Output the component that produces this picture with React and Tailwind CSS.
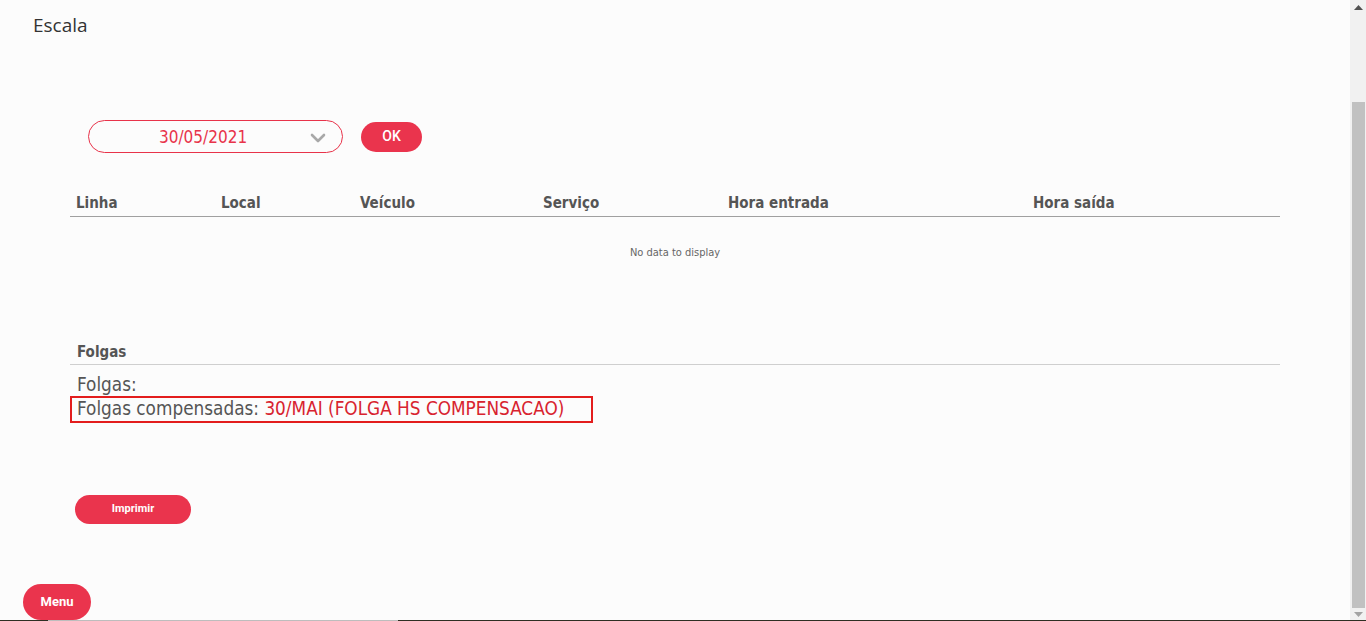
import React from "react";

const cond = { fontFamily: '"DejaVu Sans Condensed", "DejaVu Sans", sans-serif' };

function Chevron() {
  return (
    <svg width="16" height="10" viewBox="0 0 16 10" className="block">
      <path d="M2 2 L8 8 L14 2" fill="none" stroke="#a8a8a8" strokeWidth="2.6" strokeLinecap="round" strokeLinejoin="round" />
    </svg>
  );
}

export default function App() {
  const cols = ["Linha", "Local", "Veículo", "Serviço", "Hora entrada", "Hora saída"];
  return (
    <div className="relative flex h-[621px] w-[1366px] overflow-hidden bg-[#fcfcfc]">
      <div className="flex flex-1 flex-col">
        <h1
          className="pl-[33px] pt-[12px] text-[19px] leading-[26px] text-[#333]"
          style={{ fontFamily: '"Open Sans", sans-serif' }}
        >
          Escala
        </h1>

        <div className="mt-[82px] flex items-center gap-[18px] pl-[88px]">
          <div className="flex h-[33px] w-[255px] items-center rounded-full border border-[#e8334a] pl-[70px] pr-[16px] pt-[2px]">
            <span className="text-[17px] text-[#e8334a]" style={cond}>30/05/2021</span>
            <span className="ml-auto"><Chevron /></span>
          </div>
          <button
            className="h-[30px] w-[61px] rounded-full bg-[#ea344d] text-[14px] text-white"
            style={{ fontFamily: "Roboto, sans-serif", fontWeight: 500 }}
          >
            OK
          </button>
        </div>

        <div className="ml-[70px] mt-[38px] w-[1210px]" style={cond}>
          <div className="grid h-[26px] grid-cols-[145px_139px_183px_185px_305px_253px] items-center border-b border-[#a0a0a0] text-[15px] font-bold text-[#555]">
            {cols.map((c) => (
              <div key={c} className="pl-[6px]">{c}</div>
            ))}
          </div>
          <div className="flex h-[74px] items-center justify-center pb-[2px] text-[11px] text-[#666]">
            No data to display
          </div>

          <div className="mt-[36px] flex h-[38px] items-end border-b border-[#cfcfcf] pb-[1px] pl-[7px] text-[15px] font-bold text-[#555]">
            Folgas
          </div>
          <div className="pl-[7px] pt-[9px] text-[18.8px] leading-[22px] text-[#555]">Folgas:</div>
          <div className="inline-flex h-[27px] w-[523px] items-center border-2 border-[#e31d1d] pl-[5px] text-[18.8px] text-[#555]">
            Folgas compensadas:&nbsp;<span className="text-[#d8232f]">30/MAI (FOLGA HS COMPENSACAO)</span>
          </div>

          <div className="mt-[72px] pl-[5px]">
            <button
              className="h-[29px] w-[116px] rounded-full bg-[#ea344d] text-[11px] font-bold text-white"
              style={{ fontFamily: "Roboto, sans-serif" }}
            >
              Imprimir
            </button>
          </div>
        </div>
      </div>

      <div className="flex w-[16px] flex-col items-center bg-[#f1f1f1]">
        <svg width="9" height="6" viewBox="0 0 9 6" className="mt-[5px]">
          <path d="M0 5 L4.5 0 L9 5 Z" fill="#505050" />
        </svg>
        <div className="mt-[91px] h-[506px] w-[13px] bg-[#c1c1c1]" />
        <svg width="9" height="6" viewBox="0 0 9 6" className="mt-[4px]">
          <path d="M0 0 L4.5 5 L9 0 Z" fill="#a3a3a3" />
        </svg>
      </div>

      <button
        className="absolute bottom-[1px] left-[23px] h-[36px] w-[68px] rounded-full bg-[#ea344d] text-[13px] font-bold text-white"
        style={{ fontFamily: "Roboto, sans-serif" }}
      >
        Menu
      </button>

      <div className="absolute bottom-0 left-0 flex h-[1px] w-full">
        <div className="w-[48px] bg-[#2e2e22]" />
        <div className="w-[350px] bg-[#bdbdbd]" />
        <div className="flex-1 bg-[#2e2e22]" />
      </div>
    </div>
  );
}
